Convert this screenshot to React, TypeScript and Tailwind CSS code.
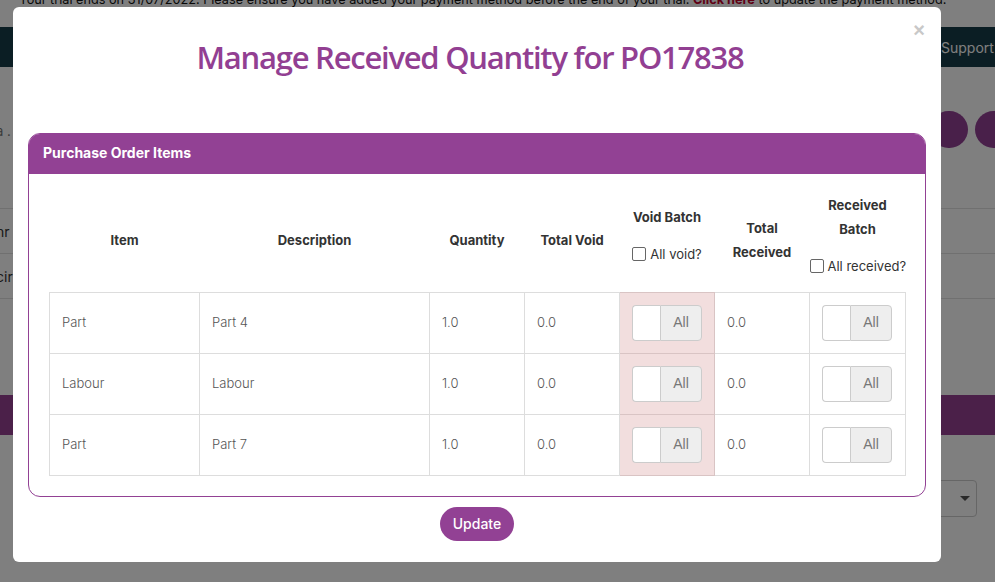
import React from 'react'

const ROWS = [
  { item: 'Part', desc: 'Part 4', qty: '1.0', voided: '0.0', received: '0.0' },
  { item: 'Labour', desc: 'Labour', qty: '1.0', voided: '0.0', received: '0.0' },
  { item: 'Part', desc: 'Part 7', qty: '1.0', voided: '0.0', received: '0.0' },
]

function AllInput() {
  return (
    <div className="flex h-[36px] w-[70px]">
      <input className="w-[28px] h-full border border-[#ccc] border-r-0 rounded-l-[4px] bg-white outline-none" />
      <span className="flex-1 flex items-center justify-center border border-[#ccc] rounded-r-[4px] bg-[#eee] text-[14px] text-[#777] font-['Liberation_Sans',sans-serif]">
        All
      </span>
    </div>
  )
}

function Check({ label }: { label: string }) {
  return (
    <label className="inline-flex items-center gap-[4px] font-normal text-[#333] leading-[16px] whitespace-nowrap">
      <span className="w-[14px] h-[14px] border border-[#666] rounded-[2px] bg-white" />
      {label}
    </label>
  )
}

export default function App() {
  return (
    <div className="relative w-[995px] h-[582px] overflow-hidden bg-white font-['Inter',sans-serif]">
      {/* page behind the modal */}
      <div className="h-[27px] flex flex-col pl-[19px] text-[12.7px] leading-[20px] text-[#111] whitespace-nowrap">
        <div className="-mt-[10px]">
          Your trial ends on 31/07/2022. Please ensure you have added your payment method before the end of your trial.{' '}
          <span className="font-bold text-[#c0002a]">Click here</span> to update the payment method.
        </div>
      </div>
      <nav className="h-[40px] bg-[#173c48] flex items-center">
        <span className="ml-[941px] text-[14px] text-white whitespace-nowrap">Support</span>
      </nav>
      <div className="h-[141px] relative">
        <span className="absolute left-[-4px] top-[55px] text-[13px] text-[#777]">a .</span>
        <div className="absolute left-[930px] top-[44px] flex gap-[7px]">
          <span className="w-[38px] h-[37px] rounded-full bg-[#924194]" />
          <span className="w-[45px] h-[37px] rounded-full bg-[#924194]" />
        </div>
      </div>
      <div className="border-t border-[#e0e0e0]">
        <div className="h-[45px] border-b border-[#e0e0e0] flex items-center text-[14px] text-[#333] -ml-[4px]">hr</div>
        <div className="h-[45px] border-b border-[#e0e0e0] flex items-center text-[14px] text-[#333] -ml-[4px]">cir</div>
      </div>
      <div className="h-[96px]" />
      <div className="h-[40px] bg-[#964092]" />
      <div className="h-[45px]" />
      <div className="ml-[930px] w-[47px] h-[37px] border border-[#ccc] rounded-[4px] flex items-center justify-end pr-[6px]">
        <span className="w-0 h-0 border-x-[5px] border-x-transparent border-t-[5px] border-t-[#555]" />
      </div>

      {/* backdrop */}
      <div className="absolute inset-0 bg-black/50" />

      {/* modal */}
      <div className="absolute left-[13px] top-[7px] w-[928px] h-[555px] bg-white rounded-[6px]">
        <button className="absolute right-[16px] top-[14px] text-[20px] leading-[18px] font-bold text-[#c8c8c8] font-['Liberation_Sans',sans-serif]">
          ×
        </button>
        <h1 className="pt-[30px] pr-[14px] h-[126px] text-center text-[31px] leading-[40px] tracking-[-1.25px] text-[#923f92] font-['Open_Sans',sans-serif] font-semibold">
          Manage Received Quantity for PO17838
        </h1>

        <div className="mx-[15px] rounded-[12px] border border-[#924194] overflow-hidden">
          <div className="h-[40px] bg-[#924194] flex items-center pb-[3px] px-[14px] text-[14px] font-bold text-white">
            Purchase Order Items
          </div>
          <div className="px-[20px] pt-[14px] pb-[20px]">
            <table className="w-full table-fixed border-collapse text-[13px] text-[#333]">
              <colgroup>
                <col className="w-[150px]" />
                <col className="w-[230px]" />
                <col className="w-[95px]" />
                <col className="w-[95px]" />
                <col className="w-[95px]" />
                <col className="w-[95px]" />
                <col className="w-[96px]" />
              </colgroup>
              <thead>
                <tr className="h-[104px] leading-[24px]">
                  <th className="align-middle px-[8px] font-bold">Item</th>
                  <th className="align-middle px-[8px] font-bold">Description</th>
                  <th className="align-middle px-[8px] font-bold">Quantity</th>
                  <th className="align-middle px-[8px] font-bold">Total Void</th>
                  <th className="align-top px-0 pt-[17px] font-bold">
                    <div>Void Batch</div>
                    <div className="mt-[15px]">
                      <Check label="All void?" />
                    </div>
                  </th>
                  <th className="align-middle px-[8px] font-bold">
                    <div>Total</div>
                    <div>Received</div>
                  </th>
                  <th className="align-top px-0 pt-[5px] font-bold">
                    <div>Received</div>
                    <div>Batch</div>
                    <div className="mt-[15px]">
                      <Check label="All received?" />
                    </div>
                  </th>
                </tr>
              </thead>
              <tbody className="text-[#555] font-light">
                {ROWS.map((r, i) => (
                  <tr key={i} className="h-[61px]">
                    <td className="border border-[#ddd] px-[12px]">{r.item}</td>
                    <td className="border border-[#ddd] px-[12px]">{r.desc}</td>
                    <td className="border border-[#ddd] px-[12px]">{r.qty}</td>
                    <td className="border border-[#ddd] px-[12px]">{r.voided}</td>
                    <td className="border border-[#d9c4c4] bg-[#f2dede] px-[12px]">
                      <AllInput />
                    </td>
                    <td className="border border-[#ddd] px-[12px]">{r.received}</td>
                    <td className="border border-[#ddd] px-[12px]">
                      <AllInput />
                    </td>
                  </tr>
                ))}
              </tbody>
            </table>
          </div>
        </div>

        <div className="flex justify-center mt-[10px]">
          <button className="h-[34px] px-[13px] rounded-full bg-[#924194] text-white text-[14px] font-medium">
            Update
          </button>
        </div>
      </div>
    </div>
  )
}
